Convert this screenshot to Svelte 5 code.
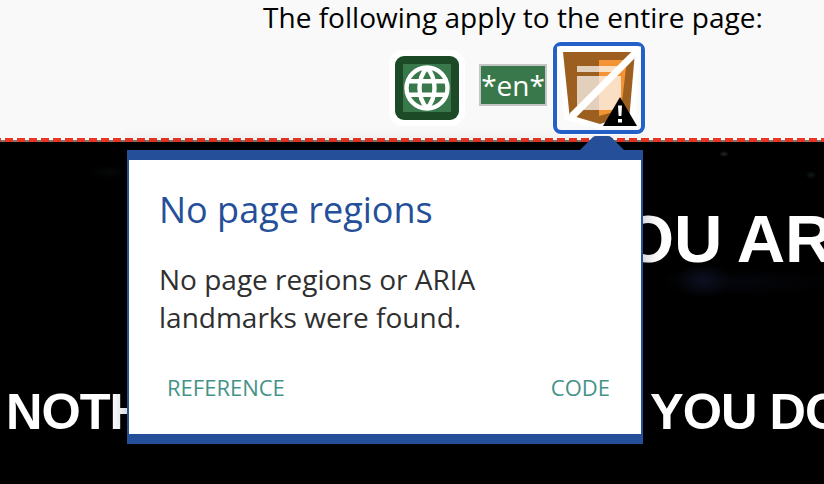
<script>
  const links = ['REFERENCE', 'CODE'];
</script>

<div class="page">
  <header>
    <p class="intro">The following apply to the entire page:</p>
    <div class="icons">
      <div class="globe">
        <svg viewBox="0 0 76 76" width="76" height="76">
          <rect x="6" y="6" width="64" height="64" rx="9" fill="#1c4a26" />
          <rect x="14" y="14" width="48" height="48" fill="#38784a" />
          <g fill="none" stroke="#fff" stroke-width="4.4">
            <circle cx="38" cy="38" r="20.5" />
            <path d="M38 17.5C28 29 28 47 38 58.5M38 17.5C48 29 48 47 38 58.5M20 31.2H56M20 44.8H56" />
          </g>
        </svg>
      </div>
      <div class="lang"><span>*en*</span></div>
      <div class="regions">
        <svg viewBox="557 46 84 84" width="84" height="84">
          <path d="M563 52H635L629.5 115L600 124L569.5 115Z" fill="#9c5f1f" stroke="#fff" stroke-width="11" paint-order="stroke" />
          <path d="M599 60H627L621 110L599 116Z" fill="#f39333" />
          <path d="M577 66H599V72H577ZM577 76H599V110H577Z" fill="#e2cfbc" />
          <path d="M599 66H621V72H599ZM599 76H621V110H599Z" fill="#fbdfc4" />
          <path d="M631.3 52L569.5 113.5L569.5 118L574.5 119L634.5 58.5L636 52Z" fill="#fff" />
          <path d="M620 97L637 126H603Z" fill="#000" />
          <path d="M618 105.5H622L621.4 116H618.6ZM618 119H622V122.5H618Z" fill="#fff" />
        </svg>
      </div>
    </div>
  </header>
  <div class="divider"></div>
  <main>
    <div class="headline">OU AR</div>
    <div class="subline"><span>NOTH</span><span>YOU DO</span></div>
  </main>
  <section class="popup">
    <svg class="arrow" viewBox="0 0 44 14" width="44" height="14"><path d="M0 14L13 1Q14 0 16 0H28Q30 0 31 1L44 14Z" fill="#254f99" /></svg>
    <h1>No page regions</h1>
    <p>No page regions or ARIA<br />landmarks were found.</p>
    <nav>
      {#each links as link}<span>{link}</span>{/each}
    </nav>
  </section>
</div>

<style>
  :global(body) { background: #000; overflow: hidden; }
  .page {
    position: relative;
    width: 824px;
    height: 484px;
    overflow: hidden;
    font-family: "Open Sans", sans-serif;
    background: #000;
  }
  svg { display: block; }
  header { height: 138px; background: #f9f9f9; }
  .intro {
    margin: 0;
    padding-left: 263px;
    height: 42px;
    line-height: 34px;
    font-size: 28px;
    letter-spacing: 0.02px;
    color: #000;
    white-space: nowrap;
  }
  .icons { display: flex; align-items: flex-start; padding-left: 389px; }
  .globe { margin-top: 8px; background: #fff; border-radius: 14px; }
  .lang {
    box-sizing: border-box;
    width: 68px;
    height: 42px;
    margin: 22px 6px 0 14px;
    border: 2px solid #c5c5c5;
    background: #38784a;
    color: #fff;
    font-size: 28px;
    line-height: 38px;
    display: flex;
    justify-content: center;
  }
  .regions {
    border: 4px solid #2460c8;
    border-radius: 8px;
    background: #fafafa;
    box-shadow: 0 0 0 1px #fff;
  }
  .divider {
    height: 4px;
    background:
      repeating-linear-gradient(90deg, #ed3424 0 8px, transparent 8px 12px) -6.5px 0 / 840px 4px,
      linear-gradient(#fff 0 2px, #6f7c70 2px 4px);
  }
  main {
    height: 342px;
    color: #fff;
    font-family: "Liberation Sans", sans-serif;
    font-weight: 700;
    white-space: nowrap;
    background:
      radial-gradient(ellipse 28px 18px at 703px 138px, #0c1020, transparent),
      radial-gradient(ellipse 100px 14px at 740px 140px, #05060c, transparent),
      radial-gradient(ellipse 5px 3px at 724px 12px, #252a2c, transparent),
      radial-gradient(ellipse 6px 4px at 811px 33px, #101a12, transparent),
      radial-gradient(ellipse 20px 8px at 110px 30px, #070809, transparent),
      #000;
  }
  .headline { padding: 59px 0 0 622px; font-size: 67px; line-height: 76px; word-spacing: -2px; }
  .subline { display: flex; padding-top: 107px; font-size: 50.5px; line-height: 56px; letter-spacing: -1px; }
  .subline span { flex: none; }
  .subline span:first-child { width: 650px; padding-left: 6px; box-sizing: border-box; }
  .popup {
    position: absolute;
    left: 127px;
    top: 150px;
    box-sizing: border-box;
    width: 516px;
    height: 294px;
    padding: 24px 31px 0 30px;
    border: solid #254f99;
    border-width: 10px 2px;
    background: #fff;
    box-shadow: 0 0 20px rgba(0, 0, 0, 0.3);
  }
  .arrow { position: absolute; left: 450.5px; top: -24px; }
  h1 { margin: 0; font-size: 36px; line-height: 52px; font-weight: 400; color: #254f99; }
  .popup p { margin: 24px 0 0; font-size: 28px; line-height: 38px; color: #2f2f2f; }
  nav { display: flex; justify-content: space-between; padding: 35px 0 0 8px; font-size: 22px; line-height: 32px; color: #449388; }
</style>
